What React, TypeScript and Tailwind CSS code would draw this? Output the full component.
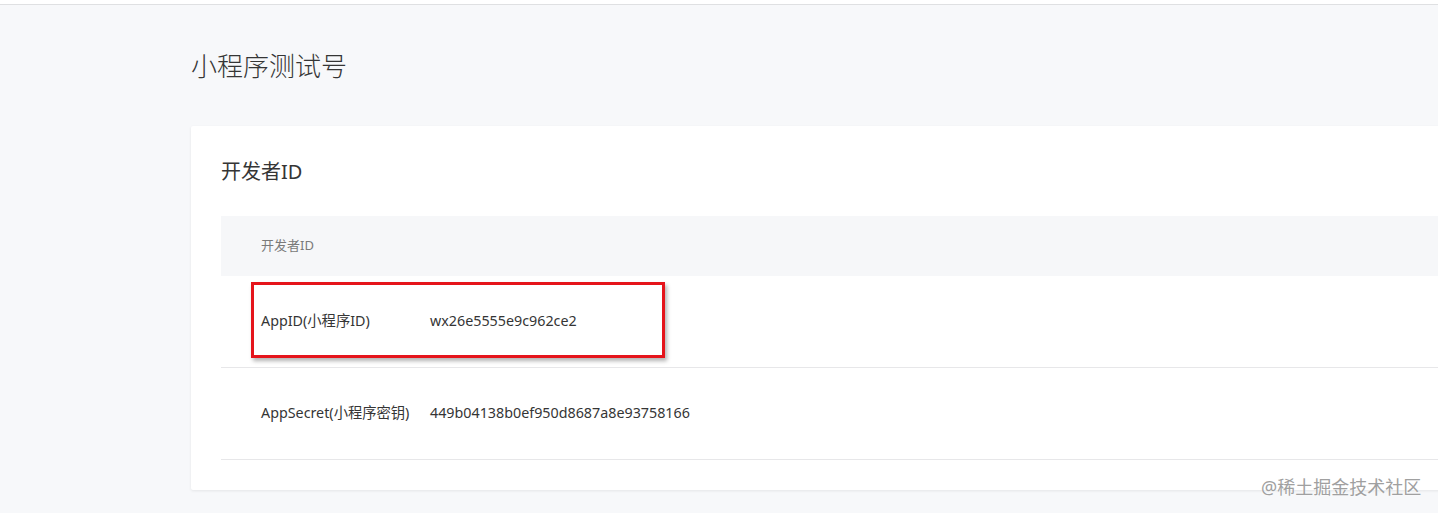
const rows = [
  { label: "AppID(小程序ID)", value: "wx26e5555e9c962ce2", marked: true },
  { label: "AppSecret(小程序密钥)", value: "449b04138b0ef950d8687a8e93758166", marked: false },
]

export default function App() {
  return (
    <div
      className="relative w-[1438px] h-[513px] overflow-hidden bg-[#f7f8fa] text-[#353535]"
      style={{ fontFamily: '"Noto Sans", "Noto Sans CJK SC", sans-serif' }}
    >
      <div className="h-[5px] bg-white border-b border-[#dfe0e2]" />

      <div className="pl-[191px]">
        <h1 className="pt-[43px] text-[26px] leading-[36px] font-light text-[#353535]">小程序测试号</h1>

        <div className="mt-[42px] w-[1300px] bg-white rounded-[2px] shadow-[0_1px_3px_rgba(0,0,0,0.08)] px-[30px] pt-[30px] pb-[30px]">
          <h2 className="text-[20px] leading-[32px] font-normal text-[#353535]">开发者ID</h2>

          <div className="relative mt-[28px]">
            <div className="h-[60px] flex items-center pl-[40px] bg-[#f6f7f9] text-[13px] text-[#7a7a7a]">开发者ID</div>
            {rows.map((row) => (
              <div key={row.label} className="h-[92px] flex items-center pl-[40px] pb-[2px] border-b border-[#e7e7e9] text-[14.3px]">
                <span className="w-[169px]">{row.label}</span>
                <span>{row.value}</span>
              </div>
            ))}
            <div className="absolute left-[30px] top-[66px] w-[414px] h-[76px] border-[3px] border-[#e5141b] shadow-[2px_3px_4px_rgba(0,0,0,0.3)]" />
          </div>
        </div>
      </div>

      <div
        className="absolute left-[1261px] top-[474px] text-[18px] leading-[26px] text-[#a0a0a0]"
        style={{ textShadow: "0 0 2px #fff" }}
      >
        @稀土掘金技术社区
      </div>
    </div>
  )
}
